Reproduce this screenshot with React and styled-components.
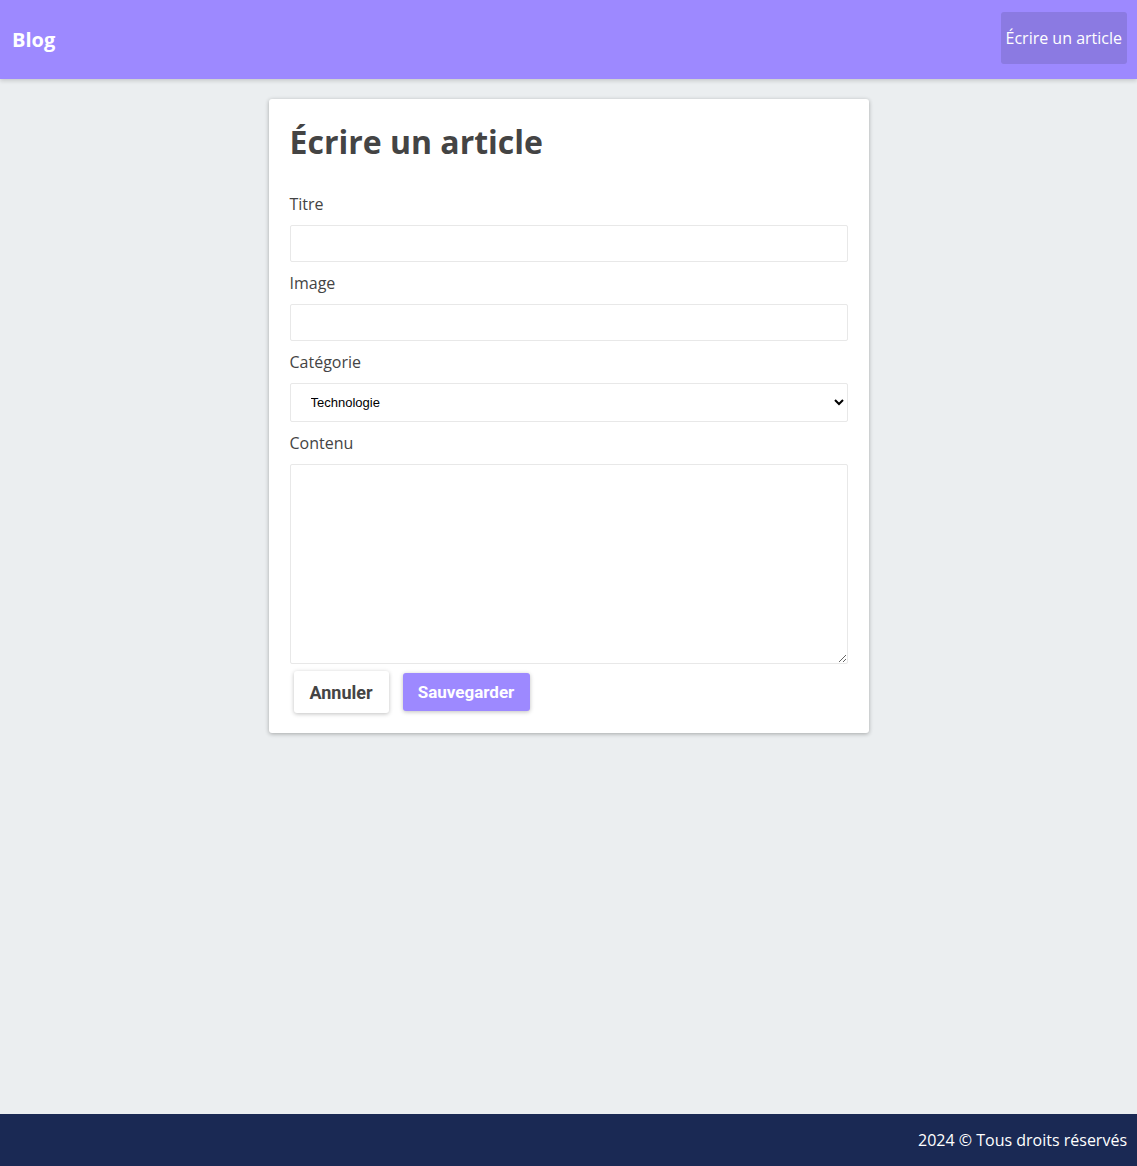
import React from 'react';
import styled, { createGlobalStyle } from 'styled-components';

// styles globaux
const GlobalStyle = createGlobalStyle`
    * { box-sizing: border-box; }
    body {
        margin: 0;
        padding: 0;
        background: #ebeef0;
        font-family: "Open Sans", "Liberation Sans", sans-serif;
        color: #444;
    }
`;

const Page = styled.div`
    min-height: 100vh;
    display: flex;
    flex-direction: column;
`;

const Header = styled.header`
    height: 79px;
    background: #9d89ff;
    display: flex;
    align-items: center;
    justify-content: space-between;
    padding: 0 10px 0 12px;
    box-shadow: 0 2px 4px rgba(0, 0, 0, 0.15);
    position: relative;
    z-index: 1;
`;

const Logo = styled.div`
    color: white;
    font-size: 20px;
    font-weight: 700;
`;

const NavButton = styled.button`
    height: 52px;
    margin-bottom: 4px;
    padding: 0 5px;
    border: none;
    border-radius: 3px;
    background: #8b7ae2;
    color: white;
    font-family: "Open Sans", sans-serif;
    font-size: 16px;
    cursor: pointer;
`;

const Main = styled.main`
    flex: 1;
    display: flex;
    justify-content: center;
    align-items: flex-start;
    padding-top: 20px;
`;

const Card = styled.form`
    width: 600px;
    background: white;
    border-radius: 3px;
    box-shadow: 0 1px 4px rgba(0, 0, 0, 0.3);
    padding: 22px 21px 20px;
    display: flex;
    flex-direction: column;
`;

const Title = styled.h1`
    margin: 2px 0 31px;
    font-size: 32px;
    line-height: 38px;
    font-weight: 700;
    color: #444;
`;

const Label = styled.label`
    font-size: 16px;
    line-height: 24px;
    color: #444;
    margin-bottom: 9px;
`;

const Input = styled.input`
    height: 37px;
    border: 1px solid #e8e8e8;
    border-radius: 2px;
    margin-bottom: 9px;
    padding: 0 16px;
    font-size: 13px;
`;

const Select = styled.select`
    height: 39px;
    border: 1px solid #e8e8e8;
    border-radius: 2px;
    margin-bottom: 9px;
    padding: 0 16px;
    background: white;
    font-family: "Liberation Sans", Arial, sans-serif;
    font-size: 13px;
    color: black;
`;

const TextArea = styled.textarea`
    height: 200px;
    border: 1px solid #e8e8e8;
    border-radius: 2px;
    padding: 8px;
    resize: vertical;
`;

const Actions = styled.div`
    display: flex;
    align-items: center;
    gap: 14px;
    padding: 7px 0 0 4px;
`;

const Button = styled.button`
    height: ${p => p.$primary ? '38px' : '42px'};
    padding: 0 14px;
    min-width: ${p => p.$primary ? '127px' : '95px'};
    border: none;
    border-radius: 3px;
    background: ${p => p.$primary ? '#9d89ff' : 'white'};
    color: ${p => p.$primary ? 'white' : '#444'};
    font-family: Roboto, "Liberation Sans", sans-serif;
    font-size: ${p => p.$primary ? '17px' : '18px'};
    font-weight: 700;
    box-shadow: 0 1px 4px rgba(0, 0, 0, 0.25);
    cursor: pointer;
`;

const Footer = styled.footer`
    height: 52px;
    background: #1a2954;
    color: white;
    display: flex;
    align-items: center;
    justify-content: flex-end;
    padding: 0 10px;
    font-size: 16px;
`;

const App = () => {
    return (
        <>
            <GlobalStyle />
            <Page>
                <Header>
                    <Logo>Blog</Logo>
                    <NavButton>Écrire un article</NavButton>
                </Header>
                <Main>
                    <Card onSubmit={e => e.preventDefault()}>
                        <Title>Écrire un article</Title>
                        <Label>Titre</Label>
                        <Input type="text" />
                        <Label>Image</Label>
                        <Input type="text" />
                        <Label>Catégorie</Label>
                        <Select defaultValue="tech">
                            <option value="tech">Technologie</option>
                        </Select>
                        <Label>Contenu</Label>
                        <TextArea />
                        <Actions>
                            <Button type="button">Annuler</Button>
                            <Button type="submit" $primary>Sauvegarder</Button>
                        </Actions>
                    </Card>
                </Main>
                <Footer>2024 © Tous droits réservés</Footer>
            </Page>
        </>
    );
};

export default App;
